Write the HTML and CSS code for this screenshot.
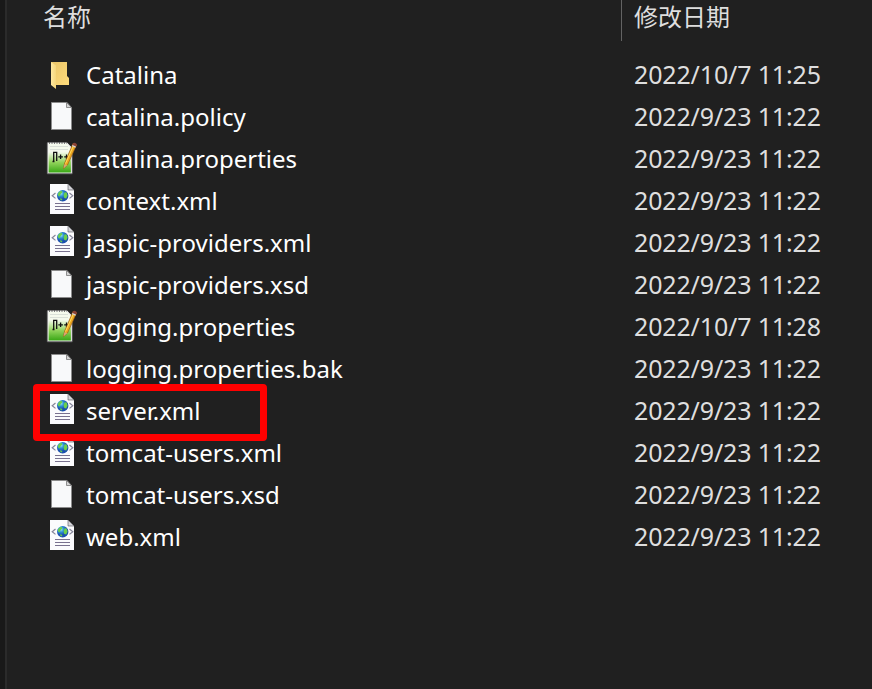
FILE: index.html
```html
<!DOCTYPE html>
<html lang="zh-CN">
<head>
<meta charset="utf-8">
<title>conf</title>
<link rel="stylesheet" href="styles.css">
</head>
<body>
<svg class="defs" aria-hidden="true">
  <defs>
    <linearGradient id="gold" x2="1" y2="1"><stop stop-color="#eac568"/><stop offset="1" stop-color="#ffdc7c"/></linearGradient>
    <linearGradient id="flap"><stop stop-color="#ffe8a0"/><stop offset="1" stop-color="#f6d77c"/></linearGradient>
    <linearGradient id="green" x2="0" y2="1"><stop offset=".3" stop-color="#f5faed"/><stop offset=".65" stop-color="#91d35b"/><stop offset="1" stop-color="#35a512"/></linearGradient>
    <radialGradient id="globe" cx=".35" cy=".3"><stop stop-color="#9ae3f8"/><stop offset=".5" stop-color="#2b8ed0"/><stop offset="1" stop-color="#1b4fae"/></radialGradient>
    <symbol id="folder" viewBox="0 0 32 36">
      <path d="M6 4h16v14l2 2v7H10z" fill="url(#gold)"/>
      <path d="M6 4l5 3.5V31l-5-4z" fill="url(#flap)"/>
    </symbol>
    <symbol id="file" viewBox="0 1 32 36">
      <path d="M6.5 3.5H22l4.5 5v22h-20z" fill="#f8f9fa" stroke="#8b8b8b"/>
      <path d="M21.5 3.5v5h5z" fill="#d4d4d4" stroke="#777" stroke-width=".8"/>
    </symbol>
    <symbol id="npp" viewBox="0 2.5 32 36">
      <path d="M3 3.5h18.7l4.8 5v25H3z" fill="url(#green)" stroke="#f0f0f0" stroke-width="1.2"/>
      <path d="M2.3 3.5v30.8h24.9V8" fill="none" stroke="#777" stroke-width=".6"/>
      <path d="M4 3.5h18" stroke="#555" stroke-width="1.6" stroke-dasharray="1 1.5"/>
      <path d="M5 7h18M5 10h18" stroke="#d0d5d0" stroke-width=".7"/>
      <path d="M7.5 22h2M8.7 22.5V12.8h3V21.5" fill="none" stroke="#111" stroke-width="1.3"/>
      <path d="M13.3 17.3h4.6M15.6 15v4.6M19.2 17.3h4.6M21.5 15v4.6" fill="none" stroke="#111" stroke-width="1.3"/>
      <path d="M18.5 29l1-5L28 4l3.5 1.5-9 20z" fill="#edaa21" stroke="#9b5a15" stroke-width=".7"/>
      <path d="M20.5 24L29 5" stroke="#ffda64"/>
      <path d="M27 6l1.3-2.6q2.5-.6 3.7 1.5L30.7 7.5z" fill="#8b4235"/>
      <path d="M27.2 6l3.5 1.6" stroke="#d4d4d4" stroke-width="1.3"/>
      <path d="M18.5 29l.9-4.3 2.7 1.1z" fill="#d7a37c"/>
    </symbol>
    <symbol id="xml" viewBox="0 3 32 36">
      <path d="M5 3h18l6 6v24H5z" fill="#fbfbfd"/>
      <path d="M23 3v6h6z" fill="#d5d5da" stroke="#55555a" stroke-width=".6"/>
      <path d="M10.5 12l-3.3 2.7 3.3 2.7M24.5 12l3.3 2.7-3.3 2.7" fill="none" stroke="#86869a" stroke-width="1.2"/>
      <circle cx="17.7" cy="14.7" r="5.7" fill="url(#globe)"/>
      <path d="M13 12.5q1.5-2.8 3.7-2.8l.6 1.8-1.8 1.7-1 2.2-1.4-.8zM19.5 11.5l2-.3 1.1 3.3-1.4 3-1.9-.6-.7-2.5zM15 17.2l2.4.7-.6 1.6-1.5-.8z" fill="#6bd04b"/>
      <path d="M10 22.5h15M10 25.5h15M10 28.5h15" stroke="#79718f"/>
    </symbol>
  </defs>
</svg>
<main class="list">
  <header class="head"><div class="col-name">名称</div><div class="col-date">修改日期</div></header>
  <div class="row"><svg class="icon"><use href="#folder"/></svg><span class="name">Catalina</span><span class="date">2022/10/7 11:25</span></div>
  <div class="row"><svg class="icon"><use href="#file"/></svg><span class="name">catalina.policy</span><span class="date">2022/9/23 11:22</span></div>
  <div class="row"><svg class="icon"><use href="#npp"/></svg><span class="name">catalina.properties</span><span class="date">2022/9/23 11:22</span></div>
  <div class="row"><svg class="icon"><use href="#xml"/></svg><span class="name">context.xml</span><span class="date">2022/9/23 11:22</span></div>
  <div class="row"><svg class="icon"><use href="#xml"/></svg><span class="name">jaspic-providers.xml</span><span class="date">2022/9/23 11:22</span></div>
  <div class="row"><svg class="icon"><use href="#file"/></svg><span class="name">jaspic-providers.xsd</span><span class="date">2022/9/23 11:22</span></div>
  <div class="row"><svg class="icon"><use href="#npp"/></svg><span class="name">logging.properties</span><span class="date">2022/10/7 11:28</span></div>
  <div class="row"><svg class="icon"><use href="#file"/></svg><span class="name">logging.properties.bak</span><span class="date">2022/9/23 11:22</span></div>
  <div class="row marked"><svg class="icon"><use href="#xml"/></svg><span class="name">server.xml</span><span class="date">2022/9/23 11:22</span></div>
  <div class="row"><svg class="icon"><use href="#xml"/></svg><span class="name">tomcat-users.xml</span><span class="date">2022/9/23 11:22</span></div>
  <div class="row"><svg class="icon"><use href="#file"/></svg><span class="name">tomcat-users.xsd</span><span class="date">2022/9/23 11:22</span></div>
  <div class="row"><svg class="icon"><use href="#xml"/></svg><span class="name">web.xml</span><span class="date">2022/9/23 11:22</span></div>
</main>
</body>
</html>
```
FILE: styles.css
```css
*, *::after { box-sizing: border-box; }
body {
  margin: 0;
  height: 689px;
  overflow: hidden;
  background: #191919;
  color: #fff;
  font: 24px/40px "Noto Sans", "Noto Sans CJK SC", sans-serif;
}
.defs { position: absolute; width: 0; height: 0; }
.list {
  height: 689px;
  margin-left: 5px;
  border-left: 2px solid #2b2b2b;
  background: #202020;
}
.head {
  display: flex;
  height: 54px;
  color: #dedede;
  line-height: 34px;
}
.col-name { width: 614px; padding-left: 36px; }
.col-date { height: 41px; padding-left: 12px; border-left: 1px solid #636363; }
.row { display: flex; height: 42px; position: relative; white-space: nowrap; }
.icon { width: 32px; height: 36px; margin: 4px 9px 0 38px; flex: none; }
.name { width: 548px; line-height: 42px; }
.date { color: #dedede; font-size: 25px; letter-spacing: -.15px; }
.marked::after {
  content: "";
  position: absolute;
  z-index: 1;
  left: 26px;
  top: -6px;
  width: 234px;
  height: 57px;
  border: 7px solid #f00;
  border-radius: 4px;
}
```
